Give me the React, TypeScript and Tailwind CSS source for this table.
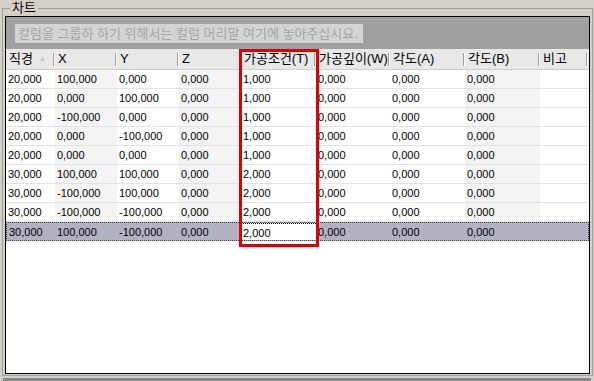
import React from "react";

const cols = [
  { label: "직경", w: 49, sort: true },
  { label: "X", w: 62 },
  { label: "Y", w: 62 },
  { label: "Z", w: 62 },
  { label: "가공조건(T)", w: 75 },
  { label: "가공깊이(W)", w: 74 },
  { label: "각도(A)", w: 75 },
  { label: "각도(B)", w: 75 },
  { label: "비고", w: 48 },
];

const rows: string[][] = [
  ["20,000", "100,000", "0,000", "0,000", "1,000", "0,000", "0,000", "0,000", ""],
  ["20,000", "0,000", "100,000", "0,000", "1,000", "0,000", "0,000", "0,000", ""],
  ["20,000", "-100,000", "0,000", "0,000", "1,000", "0,000", "0,000", "0,000", ""],
  ["20,000", "0,000", "-100,000", "0,000", "1,000", "0,000", "0,000", "0,000", ""],
  ["20,000", "0,000", "0,000", "0,000", "1,000", "0,000", "0,000", "0,000", ""],
  ["30,000", "100,000", "100,000", "0,000", "2,000", "0,000", "0,000", "0,000", ""],
  ["30,000", "-100,000", "100,000", "0,000", "2,000", "0,000", "0,000", "0,000", ""],
  ["30,000", "-100,000", "-100,000", "0,000", "2,000", "0,000", "0,000", "0,000", ""],
  ["30,000", "100,000", "-100,000", "0,000", "2,000", "0,000", "0,000", "0,000", ""],
];

const font = { fontFamily: '"Liberation Sans", "Noto Sans CJK KR", sans-serif' };

export default function App() {
  return (
    <div
      className="w-[594px] h-[381px] bg-[#d4d0c8] overflow-hidden flex flex-col text-black"
      style={font}
    >
      <fieldset className="mx-[2px] flex-1 min-h-0 border border-[#a0a0a0] pl-[2px] pr-[2px] pb-[1px] flex flex-col">
        <legend className="ml-[5px] px-[2px] text-[13px] leading-[16px] text-black">
          차트
        </legend>
        <div className="relative flex-1 min-h-0 border border-black bg-white flex flex-col">
          {/* group by panel */}
          <div className="h-[32px] bg-[#a0a0a0] pl-[9px] pt-[7px]">
            <div className="w-[348px] h-[19px] bg-[#d4d4d4] pl-[3px] text-[13px] leading-[19px] text-[#a4a4a4] whitespace-nowrap overflow-hidden">
              컬럼을 그룹하 하기 위해서는 컬럼 머리말 여기에 놓아주십시요.
            </div>
          </div>
          {/* header */}
          <div className="flex h-[21px] bg-[#e8e8e8] border-b border-[#cfcfcf]">
            {cols.map((c, i) => (
              <div
                key={i}
                className="relative flex items-center pl-[3px] text-[13px] leading-[20px] shrink-0 whitespace-nowrap"
                style={{ width: c.w }}
              >
                <span>{c.label}</span>
                {c.sort && (
                  <span className="ml-[6px] text-[7px] text-[#c0c0c0]">▲</span>
                )}
                <span className="absolute right-0 top-[4px] h-[13px] w-[2px] border-l border-[#a0a0a0] border-r border-r-white" />
              </div>
            ))}
          </div>
          {/* rows */}
          <div className="flex flex-col">
            {rows.map((r, ri) => {
              const sel = ri === rows.length - 1;
              return (
                <div
                  key={ri}
                  className={
                    sel
                      ? "flex h-[19px] bg-[#b2b2c2] border border-dotted border-[#404040]"
                      : "flex h-[19px] border-b border-[#e2e2e2]"
                  }
                >
                  {r.map((v, ci) => {
                    const editing = sel && ci === 4;
                    const cls = editing
                      ? "bg-white border-t border-dotted border-black"
                      : sel
                      ? ""
                      : ci % 2 === 1 && ci !== 5
                      ? "bg-[#f4f4f4]"
                      : "bg-white";
                    return (
                      <div
                        key={ci}
                        className={`shrink-0 pl-[2px] text-[11px] leading-[18px] ${cls}`}
                        style={{ width: sel && ci === 0 ? cols[ci].w - 1 : cols[ci].w }}
                      >
                        {v}
                      </div>
                    );
                  })}
                </div>
              );
            })}
          </div>
          {/* highlight annotation */}
          <div className="absolute left-[233px] top-[32px] w-[80px] h-[198px] border-[3px] border-[#e00000]" />
        </div>
      </fieldset>
      <div className="h-[4px] mx-[3px] mt-[1px] bg-[#8a8a8a] border-t border-[#d0d0d0]" />
    </div>
  );
}
